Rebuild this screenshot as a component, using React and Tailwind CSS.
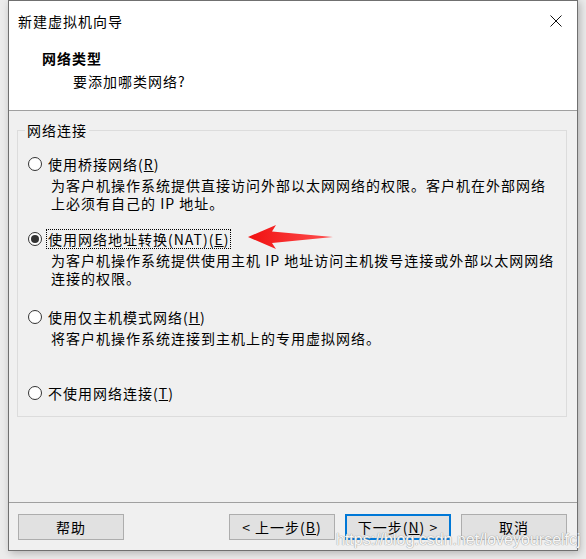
import { useState } from 'react'

const FONT = { fontFamily: '"Noto Sans CJK SC", "Liberation Sans", sans-serif' }

const options = [
  {
    id: 'bridge',
    label: '使用桥接网络',
    key: 'R',
    desc: ['为客户机操作系统提供直接访问外部以太网网络的权限。客户机在外部网络', '上必须有自己的 IP 地址。'],
  },
  {
    id: 'nat',
    label: '使用网络地址转换(NAT)',
    key: 'E',
    desc: ['为客户机操作系统提供使用主机 IP 地址访问主机拨号连接或外部以太网网络', '连接的权限。'],
  },
  {
    id: 'host',
    label: '使用仅主机模式网络',
    key: 'H',
    desc: ['将客户机操作系统连接到主机上的专用虚拟网络。'],
  },
  { id: 'none', label: '不使用网络连接', key: 'T', desc: [] },
]

function Radio({ checked }) {
  return (
    <span className="w-[14px] h-[14px] rounded-full border border-[#333333] bg-white flex items-center justify-center shrink-0">
      {checked && <span className="w-[8px] h-[8px] rounded-full bg-[#333333]" />}
    </span>
  )
}

function Button({ children, primary }) {
  return (
    <button
      className={`w-[106px] h-[26px] bg-[#e1e1e1] text-[14px] tracking-[1px] text-black flex items-center justify-center ${
        primary ? 'border-2 border-[#0078d7]' : 'border border-[#adadad]'
      }`}
    >
      {children}
    </button>
  )
}

export default function App() {
  const [selected, setSelected] = useState('nat')
  // gaps between option rows, tuned against the screenshot
  const rowMargins = ['mt-0', 'mt-[17px]', 'mt-[20px]', 'mt-[36px]']

  return (
    <div className="w-[586px] h-[559px] bg-[#ececec] relative overflow-hidden" style={FONT}>
      <div className="ml-[8px] w-[570px] h-[551px] border border-[#707070] bg-[#f0f0f0] flex flex-col shadow-[2px_2px_8px_rgba(0,0,0,0.25)]">
        {/* Header */}
        <div className="h-[110px] bg-white border-b border-[#a0a0a0] shrink-0">
          <div className="flex items-center justify-between pt-[9px] pl-[9px] pr-[15px] h-[31px]">
            <span className="text-[14px] leading-[20px] tracking-[1px] text-black">新建虚拟机向导</span>
            <svg width="12" height="12" viewBox="0 0 12 12">
              <path d="M0.5 0.5 L11.5 11.5 M11.5 0.5 L0.5 11.5" stroke="#111" strokeWidth="1" />
            </svg>
          </div>
          <div className="pl-[33px] mt-[16px] text-[14px] leading-[20px] tracking-[1px] font-bold text-black">网络类型</div>
          <div className="pl-[64px] mt-[3px] text-[14px] leading-[20px] tracking-[1px] text-black">要添加哪类网络?</div>
        </div>

        {/* Body */}
        <div className="flex-1 px-[8px] pr-[10px] pt-[19px]">
          <div className="relative border border-[#dcdcdc] pl-[10px] pt-[23px] pb-[13px]">
            <span className="absolute -top-[11px] left-[7px] bg-[#f0f0f0] px-[2px] text-[14px] leading-[20px] tracking-[1px] text-black">
              网络连接
            </span>
            {options.map((opt, i) => (
              <div key={opt.id} className={rowMargins[i]}>
                <div className="flex items-center h-[20px] cursor-default" onClick={() => setSelected(opt.id)}>
                  <Radio checked={selected === opt.id} />
                  <span
                    className={`ml-[4px] text-[14px] leading-[18px] tracking-[1px] text-black px-[1px] border ${
                      selected === opt.id ? 'border-dotted border-black' : 'border-transparent'
                    }`}
                  >
                    {opt.label}(<span className="underline">{opt.key}</span>)
                  </span>
                </div>
                {opt.desc.length > 0 && (
                  <div className="pl-[23px] mt-[2px] text-[14px] leading-[18px] tracking-[1px] text-black whitespace-nowrap">
                    {opt.desc.map((line) => (
                      <div key={line}>{line}</div>
                    ))}
                  </div>
                )}
              </div>
            ))}
          </div>
        </div>

        {/* Footer */}
        <div className="h-[48px] border-t border-[#a0a0a0] shrink-0 flex items-start pt-[11px] pl-[9px] pr-[10px]">
          <Button>帮助</Button>
          <div className="ml-auto flex gap-[10px]">
            <Button>
              &lt; 上一步(<span className="underline">B</span>)
            </Button>
            <Button primary>
              下一步(<span className="underline">N</span>) &gt;
            </Button>
            <Button>取消</Button>
          </div>
        </div>
      </div>

      {/* red annotation arrow */}
      <svg className="absolute left-[246px] top-[224px]" width="90" height="28" viewBox="246 224 90 28">
        <defs>
          <linearGradient id="arrowFill" x1="0" x2="1" y1="0" y2="0">
            <stop offset="0" stopColor="#f01010" />
            <stop offset="1" stopColor="#ff5050" />
          </linearGradient>
        </defs>
        <polygon
          points="248,237 276,225 272,231.5 333,237 272,243 276,249"
          fill="url(#arrowFill)"
        />
      </svg>

      {/* watermark */}
      <div
        className="absolute left-[336px] top-[530px] pointer-events-none text-[16px] leading-[20px] text-[#f7f7f7] [text-shadow:0_0_1px_#9a9a9a,0_0_1px_#9a9a9a] whitespace-nowrap"
        style={{ fontFamily: '"Liberation Sans", Arial, sans-serif' }}
      >
        https://blog.csdn.net/loveyourselfcj
      </div>
    </div>
  )
}
